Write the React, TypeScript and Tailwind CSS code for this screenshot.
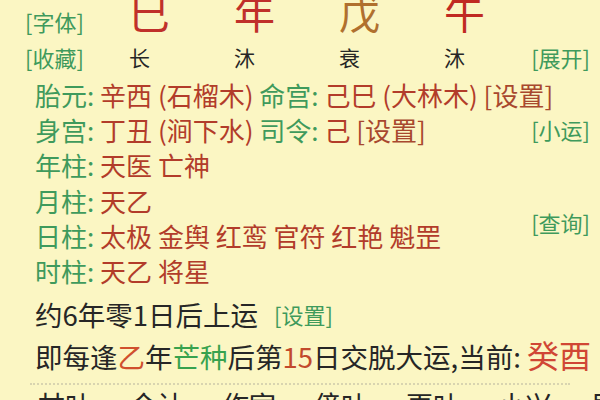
import React from "react";

const GREEN = "text-[#3f9a5c]";
const RED = "text-[#b23c2a]";

function Row({ label, children }: { label: string; children: React.ReactNode }) {
  return (
    <div className="h-[35.2px] leading-[35.2px] whitespace-pre">
      <span className={GREEN}>{label}: </span>
      {children}
    </div>
  );
}

export default function App() {
  return (
    <div
      className="w-[600px] h-[400px] overflow-hidden bg-[#fbf6c3] text-[#262626]"
      style={{ fontFamily: '"Noto Sans CJK SC", "Noto Sans", sans-serif' }}
    >
      {/* Pillars */}
      <div className="flex items-start h-[40px]">
        <div className={`w-[87px] pl-[25px] mt-[4px] text-[22px] leading-[35px] ${GREEN}`}>[字体]</div>
        <div className="flex pl-[10px] -mt-[9px] text-[41px] leading-[41px]">
          <span className="w-[105px] text-center text-[#c0302a]">巳</span>
          <span className="w-[105px] text-center text-[#c0302a]">年</span>
          <span className="w-[105px] text-center text-[#b0702e]">戊</span>
          <span className="w-[105px] text-center text-[#c02a22]">午</span>
        </div>
      </div>

      {/* States */}
      <div className="flex items-center h-[35px] text-[21px]">
        <div className={`w-[87px] pl-[25px] text-[22px] ${GREEN}`}>[收藏]</div>
        <span className="w-[105px] text-center">长</span>
        <span className="w-[105px] text-center">沐</span>
        <span className="w-[105px] text-center">衰</span>
        <span className="w-[105px] text-center">沐</span>
        <span className={`flex-1 text-right pr-[10px] text-[22px] ${GREEN}`}>[展开]</span>
      </div>

      {/* Details */}
      <div className="mt-[2px] pl-[35px] text-[26px]">
        <Row label="胎元">
          <span className={RED}>辛西 (石榴木) </span>
          <span className={GREEN}>命宫: </span>
          <span className={RED}>己巳 (大林木) </span>
          <span className="text-[#a8482e]">[设置]</span>
        </Row>
        <div className="flex items-center justify-between pr-[10px]">
          <Row label="身宫">
            <span className={RED}>丁丑 (涧下水) </span>
            <span className={GREEN}>司令: </span>
            <span className={RED}>己 </span>
            <span className="text-[#a8482e]">[设置]</span>
          </Row>
          <span className={`text-[22px] ${GREEN}`}>[小运]</span>
        </div>
        <Row label="年柱">
          <span className={RED}>天医 亡神</span>
        </Row>
        <Row label="月柱">
          <span className={RED}>天乙</span>
        </Row>
        <div className="flex items-start justify-between pr-[10px]">
          <Row label="日柱">
            <span className={RED}>太极 金舆 红鸾 官符 红艳 魁罡</span>
          </Row>
          <span className={`-mt-[12px] text-[22px] ${GREEN}`}>[查询]</span>
        </div>
        <Row label="时柱">
          <span className={RED}>天乙 将星</span>
        </Row>
      </div>

      {/* Luck */}
      <div className="mt-[6px] pl-[35px] text-[27.5px] leading-[40px] whitespace-pre">
        <div className="flex items-center">
          <span>约6年零1日后上运</span>
          <span className={`ml-[16px] text-[22px] ${GREEN}`}>[设置]</span>
        </div>
        <div>
          即每逢<span className="text-[#d0502e]">乙</span>年<span className="text-[#38a24e]">芒种</span>后第<span className="text-[#c24a2c]">15</span>日交脱大运,当前: <span className="text-[32px] text-[#d04634]">癸酉</span>
        </div>
      </div>

      <div className="mt-[7px] mx-[30px] border-t-2 border-dotted border-[#d8d4b0]" />

      <div className="flex gap-[38px] pl-[38px] mt-[6px] text-[27px] leading-[27px] whitespace-nowrap">
        <span>甘叶</span>
        <span>今计</span>
        <span>作宦</span>
        <span>傍叶</span>
        <span>更叶</span>
        <span>小兴</span>
        <span>艮</span>
      </div>
    </div>
  );
}
